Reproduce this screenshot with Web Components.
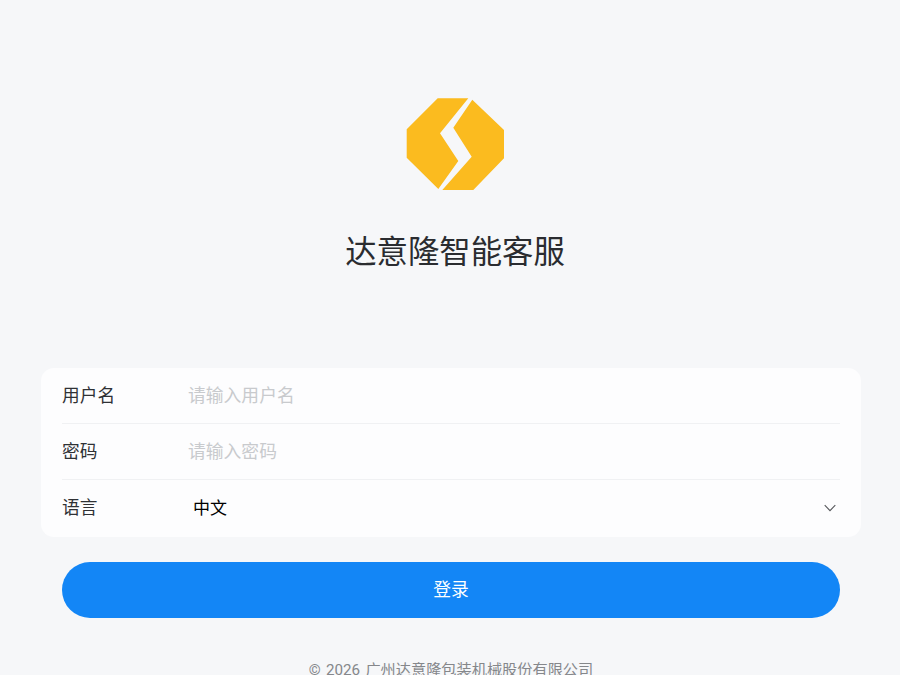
<!DOCTYPE html>
<html lang="zh-CN">
<head>
<meta charset="utf-8">
<title>达意隆智能客服</title>
<style>
  html, body { margin: 0; height: 675px; overflow: hidden; background: #f6f7f9; }
  body { font-family: "Noto Sans CJK SC", "Noto Sans", sans-serif; }
</style>
</head>
<body>
<login-screen>
  <brand-header slot="brand" title-text="达意隆智能客服"></brand-header>
  <form-card slot="form">
    <form-row label="用户名"><text-field placeholder="请输入用户名"></text-field></form-row>
    <form-row label="密码"><text-field placeholder="请输入密码" type="password"></text-field></form-row>
    <form-row label="语言" last><lang-select value="中文"></lang-select></form-row>
  </form-card>
  <login-button slot="action">登录</login-button>
  <page-footer slot="footer">© 2026 广州达意隆包装机械股份有限公司</page-footer>
</login-screen>

<script>
class LoginScreen extends HTMLElement {
  constructor() {
    super();
    this.attachShadow({ mode: 'open' });
    this.shadowRoot.innerHTML = `
      <style>
        :host { display: flex; flex-direction: column; padding-top: 98px; }
        .form { display: block; margin: 0 39px 0 41px; }
        .action { display: block; margin: 25px 60px 0 62px; }
      </style>
      <slot name="brand"></slot>
      <div class="form"><slot name="form"></slot></div>
      <div class="action"><slot name="action"></slot></div>
      <slot name="footer"></slot>
    `;
  }
}

class BrandHeader extends HTMLElement {
  constructor() {
    super();
    this.attachShadow({ mode: 'open' });
  }

  connectedCallback() {
    this.shadowRoot.innerHTML = `
      <style>
        :host { display: flex; flex-direction: column; align-items: center; height: 270px; padding-left: 10px; box-sizing: border-box; }
        svg { display: block; width: 98px; height: 92px; }
        h1 { margin: 38px 0 0; font-size: 31.4px; line-height: 44px; font-weight: 400; color: #2a2c30; }
      </style>
      <svg viewBox="406 98 98 92" aria-hidden="true">
        <path fill="#fbbb1f" d="M437.7 98.3H468.3L440 133.3 458.3 161 438.3 189 406.7 157.7V129.3Z"/>
        <path fill="#fbbb1f" d="M472.3 99.7 504 130V158.3L473.3 190H442.3L471.7 156.7 453.3 127.7Z"/>
      </svg>
      <h1>${this.getAttribute('title-text')}</h1>
    `;
  }
}

class FormCard extends HTMLElement {
  constructor() {
    super();
    this.attachShadow({ mode: 'open' });
    this.shadowRoot.innerHTML = `
      <style>
        :host { display: block; padding: 0 21px; background: #fdfdfe; border-radius: 13px; }
      </style>
      <slot></slot>
    `;
  }
}

class FormRow extends HTMLElement {
  constructor() {
    super();
    this.attachShadow({ mode: 'open' });
  }

  connectedCallback() {
    this.shadowRoot.innerHTML = `
      <style>
        :host { display: flex; align-items: center; height: 56px; box-sizing: border-box; padding-bottom: 3px; border-bottom: 1px solid #f0f1f3; }
        :host([last]) { border-bottom: 0; height: 57px; padding-bottom: 5px; }
        label { flex: 0 0 126px; font-size: 17.7px; color: #2f3135; }
        .control { flex: 1; min-width: 0; }
      </style>
      <label>${this.getAttribute('label')}</label>
      <div class="control"><slot></slot></div>
    `;
  }
}

class TextField extends HTMLElement {
  constructor() {
    super();
    this.attachShadow({ mode: 'open' });
  }

  connectedCallback() {
    const type = this.getAttribute('type') || 'text';
    this.shadowRoot.innerHTML = `
      <style>
        :host { display: block; }
        input { display: block; width: 100%; box-sizing: border-box; padding: 0; border: 0; outline: 0; background: transparent; font: inherit; font-size: 17.8px; line-height: 26px; color: #2f3135; }
        input::placeholder { color: #c8cacd; opacity: 1; }
      </style>
      <input type="${type}" placeholder="${this.getAttribute('placeholder')}">
    `;
  }
}

class LangSelect extends HTMLElement {
  constructor() {
    super();
    this.attachShadow({ mode: 'open' });
  }

  connectedCallback() {
    this.shadowRoot.innerHTML = `
      <style>
        :host { display: flex; align-items: center; justify-content: space-between; padding: 0 4px 0 5px; font-size: 17px; color: #000; }
        svg { display: block; width: 12px; height: 8px; margin-top: 3px; }
      </style>
      <span>${this.getAttribute('value')}</span>
      <svg viewBox="0 0 12 8" fill="none" stroke="#55575b" stroke-width="1.1" aria-hidden="true">
        <path d="M.7 1.2 6 6.6 11.3 1.2"/>
      </svg>
    `;
  }
}

class LoginButton extends HTMLElement {
  constructor() {
    super();
    this.attachShadow({ mode: 'open' });
    this.shadowRoot.innerHTML = `
      <style>
        :host { display: block; }
        button { display: block; width: 100%; height: 56px; padding: 0 0 4px; border: 0; border-radius: 28px; background: #1386f6; color: #fff; font: inherit; font-size: 17.8px; cursor: pointer; }
      </style>
      <button type="button"><slot></slot></button>
    `;
  }
}

class PageFooter extends HTMLElement {
  constructor() {
    super();
    this.attachShadow({ mode: 'open' });
    this.shadowRoot.innerHTML = `
      <style>
        :host { display: block; margin-top: 40px; padding-left: 2px; text-align: center; font-family: Roboto, "Noto Sans CJK SC", sans-serif; font-size: 15.2px; word-spacing: 1.5px; line-height: 24px; color: #85878b; white-space: nowrap; }
      </style>
      <slot></slot>
    `;
  }
}

customElements.define('login-screen', LoginScreen);
customElements.define('brand-header', BrandHeader);
customElements.define('form-card', FormCard);
customElements.define('form-row', FormRow);
customElements.define('text-field', TextField);
customElements.define('lang-select', LangSelect);
customElements.define('login-button', LoginButton);
customElements.define('page-footer', PageFooter);
</script>
</body>
</html>
